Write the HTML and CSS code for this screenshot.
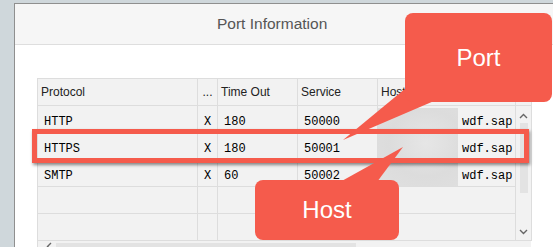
FILE: index.html
```html
<!DOCTYPE html>
<html lang="en">
<head>
    <meta charset="UTF-8">
    <meta name="viewport" content="width=device-width, initial-scale=1.0">
    <title>Port Information</title>
    <link rel="stylesheet" href="styles.css">
</head>
<body>
    <div class="desktop">
        <div class="dialog">
            <div class="dialog-header">Port Information</div>
            <div class="dialog-body">
                <table class="ports">
                    <colgroup>
                        <col class="col-protocol">
                        <col class="col-flag">
                        <col class="col-timeout">
                        <col class="col-service">
                        <col class="col-host">
                        <col class="col-scroll">
                    </colgroup>
                    <tr>
                        <th>Protocol</th>
                        <th class="flag">...</th>
                        <th>Time Out</th>
                        <th>Service</th>
                        <th>Host</th>
                        <th class="scroll-cell"></th>
                    </tr>
                    <tr>
                        <td>HTTP</td>
                        <td class="flag">X</td>
                        <td>180</td>
                        <td>50000</td>
                        <td class="host">wdf.sap</td>
                        <td class="scroll-cell" rowspan="5">
                            <div class="vscroll">
                                <svg class="arrow" width="9" height="6" viewBox="0 0 9 6"><polyline points="1,5 4.5,1.5 8,5" /></svg>
                                <div class="vscroll-track"></div>
                                <svg class="arrow arrow-down" width="9" height="6" viewBox="0 0 9 6"><polyline points="1,1 4.5,4.5 8,1" /></svg>
                            </div>
                        </td>
                    </tr>
                    <tr>
                        <td>HTTPS</td>
                        <td class="flag">X</td>
                        <td>180</td>
                        <td>50001</td>
                        <td class="host">wdf.sap</td>
                    </tr>
                    <tr>
                        <td>SMTP</td>
                        <td class="flag">X</td>
                        <td>60</td>
                        <td>50002</td>
                        <td class="host">wdf.sap</td>
                    </tr>
                    <tr>
                        <td></td><td></td><td></td><td></td><td></td>
                    </tr>
                    <tr>
                        <td></td><td></td><td></td><td></td><td></td>
                    </tr>
                </table>
                <div class="hscroll">
                    <svg class="arrow" width="6" height="9" viewBox="0 0 6 9"><polyline points="5,1 1.5,4.5 5,8" /></svg>
                    <div class="hscroll-track"></div>
                </div>
            </div>
        </div>

        <!-- annotations drawn over the screenshot -->
        <div class="redaction"></div>
        <div class="highlight"></div>
        <svg class="tails" width="553" height="247" viewBox="0 0 553 247">
            <polygon points="406,88 434,101 343,140" />
            <polygon points="340,182 377,182 403,147" />
        </svg>
        <div class="callout callout-port">Port</div>
        <div class="callout callout-host">Host</div>
    </div>
</body>
</html>
```

FILE: styles.css
```css
body {
    margin: 0;
    background: #cfd7db;
    overflow: hidden;
    font-family: "Liberation Sans", Arial, sans-serif;
}
.desktop {
    position: relative;
    height: 247px;
    overflow: hidden;
}
.dialog {
    margin: 3px 0 0 14px;
    width: 538px;
    height: 243px;
    overflow: hidden;
    background: #fff;
    border: 1px solid #8f8f8f;
    border-right: none;
    border-bottom: none;
}
.dialog-header {
    height: 40px;
    line-height: 40px;
    padding-left: 202px;
    background: #f6f6f6;
    border-bottom: 1px solid #dedede;
    font-size: 15.5px;
    color: #555;
}
.dialog-body {
    padding: 33px 0 0 22px;
}
.ports {
    border-collapse: collapse;
    table-layout: fixed;
    width: 494px;
    background: #f2f2f2;
    font-size: 12px;
}
.col-protocol { width: 160px; }
.col-flag { width: 20px; }
.col-timeout { width: 80px; }
.col-service { width: 80px; }
.col-host { width: 138px; }
.col-scroll { width: 16px; }
.ports tr {
    height: 27px;
}
.ports th,
.ports td {
    padding: 0 6px;
    border: 1px solid #dddddd;
    text-align: left;
    white-space: nowrap;
    overflow: hidden;
}
.ports th {
    padding-left: 3px;
    font-weight: normal;
    color: #222;
}
.ports td {
    padding-top: 5px;
    font-family: "Liberation Mono", "Courier New", monospace;
    color: #000;
}
.ports .flag {
    padding-left: 0;
    padding-right: 0;
    text-align: center;
}
.ports .host {
    padding-left: 84px;
}
.ports .scroll-cell {
    padding: 0;
    vertical-align: top;
}
.vscroll {
    display: flex;
    flex-direction: column;
    align-items: center;
    padding-top: 7px;
}
.arrow {
    fill: none;
    stroke: #666;
    stroke-width: 1.4;
}
.vscroll-track {
    width: 8px;
    height: 70px;
    margin-top: 4px;
    background: #e3e3e3;
}
.arrow-down {
    margin-top: 36px;
}
.hscroll {
    display: flex;
    align-items: center;
    gap: 4px;
    width: 494px;
    height: 10px;
    padding-left: 8px;
    box-sizing: border-box;
    background: #f2f2f2;
    border-left: 1px solid #dddddd;
}
.hscroll-track {
    width: 300px;
    height: 6px;
    background: #e3e3e3;
}
.redaction {
    position: absolute;
    left: 378px;
    top: 108px;
    width: 80px;
    height: 78px;
    background: radial-gradient(ellipse at 60% 45%, #e6e6e6 0%, #dcdcdc 55%, #e0e0e0 100%);
}
.highlight {
    position: absolute;
    left: 32px;
    top: 129px;
    width: 487px;
    height: 24px;
    border: 5px solid #f55b4c;
    box-shadow: 1px 2px 3px rgba(0, 0, 0, 0.45);
}
.tails {
    position: absolute;
    left: 0;
    top: 0;
    fill: #f55b4c;
}
.callout {
    position: absolute;
    display: flex;
    align-items: center;
    justify-content: center;
    background: #f55b4c;
    border-radius: 8px;
    color: #fff;
    font-size: 24px;
}
.callout-port {
    left: 405px;
    top: 13px;
    width: 147px;
    height: 89px;
}
.callout-host {
    left: 255px;
    top: 180px;
    width: 144px;
    height: 60px;
}
```
